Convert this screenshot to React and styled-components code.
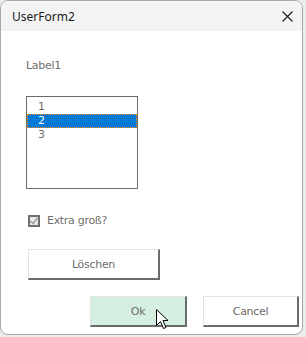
import React from "react";
import styled, { createGlobalStyle } from "styled-components";

const Global = createGlobalStyle`
  html, body {
    margin: 0;
    padding: 0;
    background: #ececec;
  }
  body {
    width: 306px;
    height: 337px;
    overflow: hidden;
  }
`;

const Window = styled.div`
  position: relative;
  width: 301px;
  height: 333px;
  background: #fff;
  border: 1px solid #a8a8a8;
  border-radius: 8px;
  overflow: hidden;
  display: flex;
  flex-direction: column;
`;

const TitleBar = styled.div`
  height: 30px;
  flex: none;
  background: #f3f3f3;
  display: flex;
  align-items: center;
  justify-content: space-between;
  padding: 0 9px 0 11px;
  font-family: "Noto Sans", "Open Sans", sans-serif;
  font-size: 12px;
  color: #1a1a1a;
`;

const CloseIcon = styled.svg`
  display: block;
  margin-top: 1px;
`;

const Body = styled.div`
  flex: 1;
  display: flex;
  flex-direction: column;
  align-items: flex-start;
  padding: 28px 0 0 25px;
  font-family: "DejaVu Sans", Tahoma, sans-serif;
  font-size: 11px;
  letter-spacing: -0.3px;
  color: #707070;
`;

const Label = styled.div`
  line-height: 13px;
`;

const ListBox = styled.div`
  margin-top: 24px;
  width: 110px;
  height: 88px;
  border: 1px solid #6a6a6a;
  padding-top: 3px;
`;

const ListItem = styled.div`
  height: 12px;
  line-height: 12px;
  padding-left: 10px;
  border: 1px ${({ selected }) => (selected ? "dotted #1a1a1a" : "solid transparent")};
  background: ${({ selected }) => (selected ? "#0078d7" : "transparent")};
  color: ${({ selected }) => (selected ? "#fff" : "#7a6a5e")};
  outline: ${({ selected }) => (selected ? "1px dotted #ff8c00" : "none")};
  outline-offset: -1px;
`;

const CheckRow = styled.div`
  margin-top: 25px;
  display: flex;
  align-items: center;
  gap: 7px;
  padding-left: 2px;
  line-height: 13px;
`;

const CheckBox = styled.div`
  width: 8px;
  height: 8px;
  border: 2px solid #6e6e6e;
  background: #e9e9e9;
  display: flex;
  align-items: center;
  justify-content: center;
`;

const Button = styled.div`
  box-sizing: border-box;
  width: ${({ w }) => w}px;
  height: 31px;
  display: flex;
  align-items: center;
  justify-content: center;
  background: ${({ tint }) => (tint ? "#d5efe1" : "#fff")};
  border-top: 1px solid #e2e2e2;
  border-left: 1px solid #e2e2e2;
  border-right: 2px solid #6b6b6b;
  border-bottom: 2px solid #6b6b6b;
  color: #6c6c6c;
  font-size: 11px;
`;

const LoeschenWrap = styled.div`
  margin-top: 22px;
  padding-left: 2px;
`;

const Footer = styled.div`
  align-self: stretch;
  display: flex;
  justify-content: flex-end;
  gap: 16px;
  margin-top: 16px;
  padding-right: 3px;
`;

const Cursor = styled.svg`
  position: absolute;
  left: 155px;
  top: 308px;
`;

export default function App() {
  return (
    <>
      <Global />
      <Window>
        <TitleBar>
          <span>UserForm2</span>
          <CloseIcon width="11" height="11" viewBox="0 0 11 11">
            <path d="M0.5 0.5 L10.5 10.5 M10.5 0.5 L0.5 10.5" stroke="#1a1a1a" strokeWidth="1.1" />
          </CloseIcon>
        </TitleBar>
        <Body>
          <Label>Label1</Label>
          <ListBox>
            <ListItem>1</ListItem>
            <ListItem selected>2</ListItem>
            <ListItem>3</ListItem>
          </ListBox>
          <CheckRow>
            <CheckBox>
              <svg width="8" height="8" viewBox="0 0 8 8">
                <path d="M0.5 4 L3 6.5 L7.5 1" fill="none" stroke="#9a9a9a" strokeWidth="1.5" />
              </svg>
            </CheckBox>
            <span>Extra groß?</span>
          </CheckRow>
          <LoeschenWrap>
            <Button w={132}>Löschen</Button>
          </LoeschenWrap>
          <Footer>
            <Button w={97} tint>Ok</Button>
            <Button w={96}>Cancel</Button>
          </Footer>
        </Body>
        <Cursor width="13" height="21" viewBox="0 0 13 21">
          <path
            d="M0.5 0.5 L0.5 16.5 L4.5 12.5 L7.5 19.5 L10 18.5 L7 11.5 L12 11.5 Z"
            fill="#fff"
            stroke="#000"
            strokeWidth="1"
            strokeLinejoin="miter"
          />
        </Cursor>
      </Window>
    </>
  );
}
